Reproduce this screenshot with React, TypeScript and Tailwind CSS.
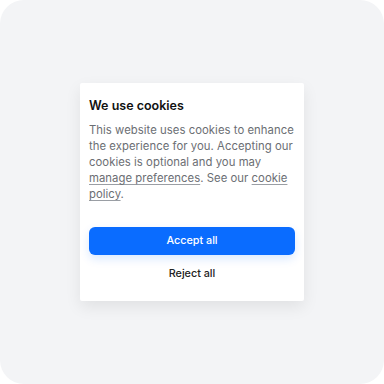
export default function App() {
  return (
    <div className="w-[384px] h-[384px] bg-white" style={{ fontFamily: "Inter, 'Noto Sans', sans-serif" }}>
      <div className="w-full h-full rounded-[24px] bg-[#f3f4f6] flex items-center justify-center">
        <div className="w-[224px] bg-white rounded-[2px] shadow-[0_6px_16px_rgba(0,0,0,0.08)] px-[9px] pt-[15px] pb-[14px] flex flex-col">
          <h2 className="text-[12.5px] leading-[16px] font-semibold text-[#111]">We use cookies</h2>
          <p className="mt-[8px] text-[11.3px] leading-[16px] tracking-[0.05px] text-[#6b6e73] whitespace-nowrap">
            This website uses cookies to enhance
            <br />
            the experience for you. Accepting our
            <br />
            cookies is optional and you may
            <br />
            <span className="underline underline-offset-2 decoration-[#9a9ea4]">manage preferences</span>. See our{" "}
            <span className="underline underline-offset-2 decoration-[#9a9ea4]">cookie</span>
            <br />
            <span className="underline underline-offset-2 decoration-[#9a9ea4]">policy</span>.
          </p>
          <button className="mt-[25px] h-[28px] w-full rounded-[6px] bg-[#0a6cff] text-white text-[10.8px] font-medium shadow-[0_4px_10px_rgba(10,108,255,0.15)]">
            Accept all
          </button>
          <button className="mt-[6px] h-[26px] w-full text-[10.8px] font-medium text-[#222]">Reject all</button>
        </div>
      </div>
    </div>
  );
}
